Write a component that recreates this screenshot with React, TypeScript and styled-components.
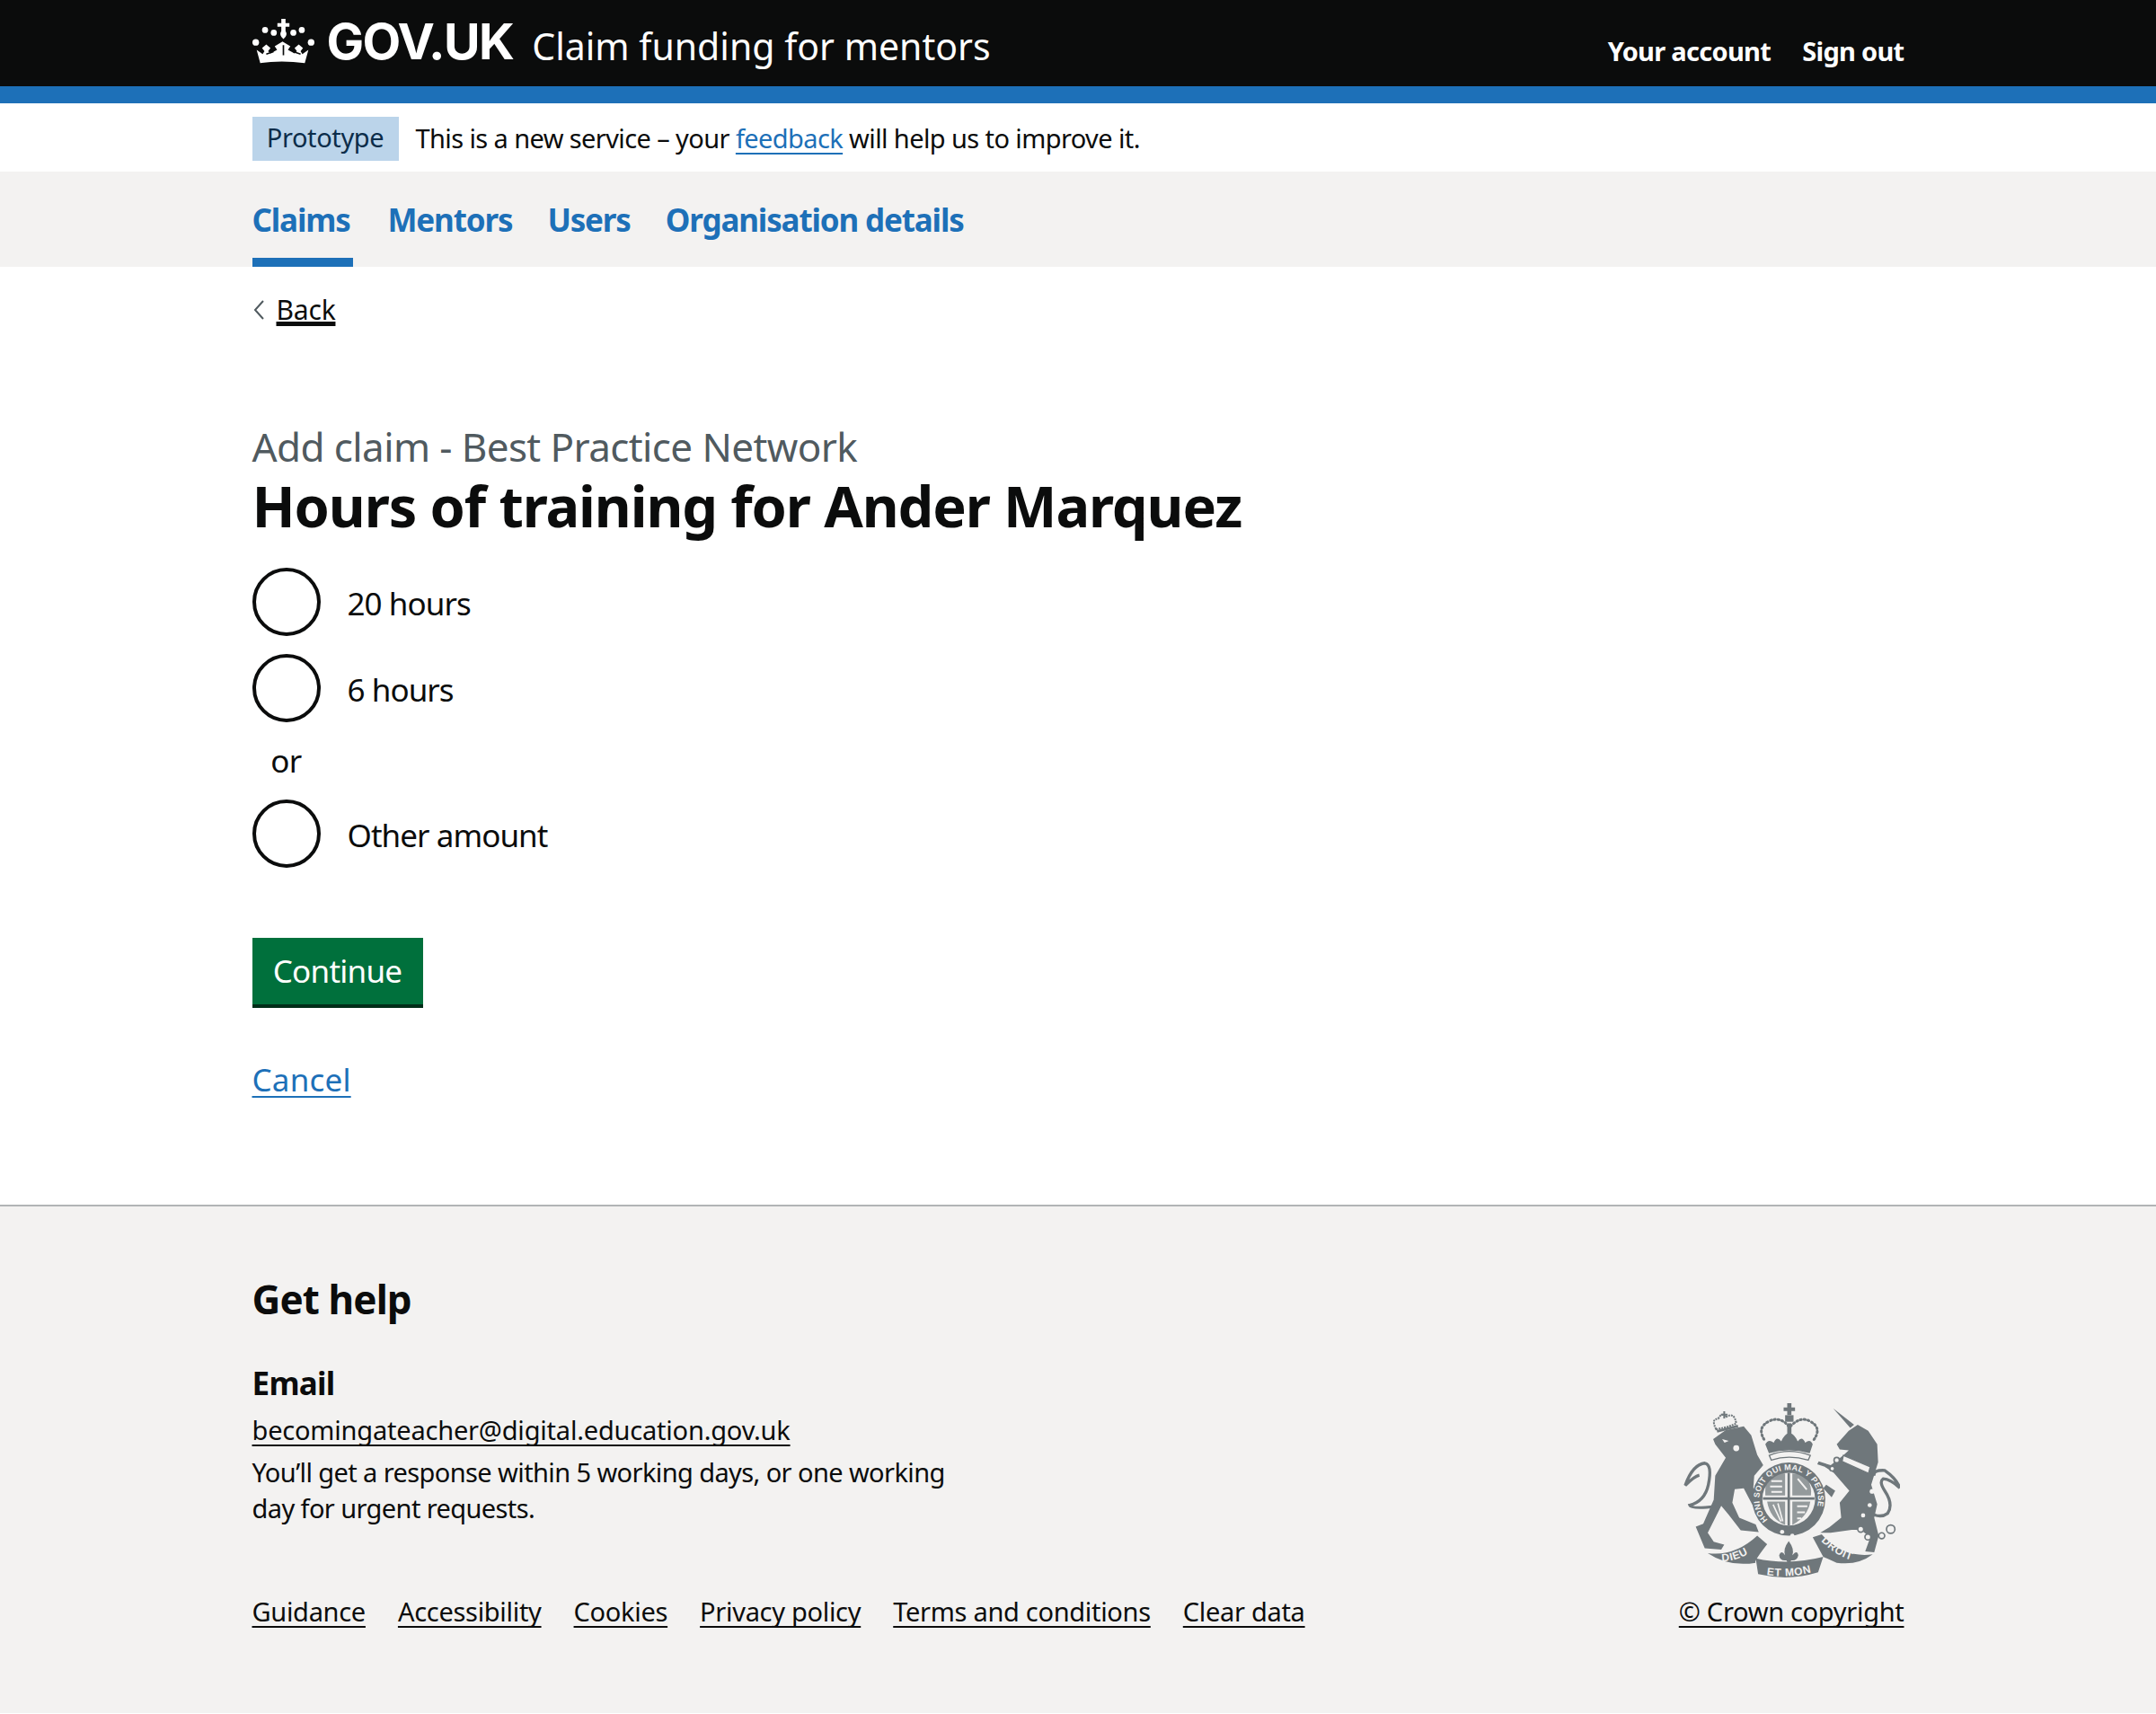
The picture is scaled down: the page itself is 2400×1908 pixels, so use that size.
import styled, { createGlobalStyle, css } from 'styled-components';

const GlobalStyle = createGlobalStyle`
  html, body { margin: 0; padding: 0; background: #fff; }
  body { font-family: 'Noto Sans', 'Liberation Sans', sans-serif; color: #0b0c0c; }
  * { box-sizing: border-box; }
`;

const underline = css`
  text-decoration: underline;
  text-decoration-thickness: 2px;
  text-underline-offset: 5px;
  text-decoration-skip-ink: none;
`;

const CrownLogo = () => (
  <svg width="69" height="50" viewBox="62 33 206 149" fill="#fff" aria-hidden="true">
    <path d="M158 33h14v14h13v12h-13v14q9 14 -7 27q-16 -13 -7 -27V59h-13V47h13z" />
    <circle cx="104" cy="70" r="10" />
    <circle cx="133" cy="79" r="10" />
    <circle cx="198" cy="79" r="10" />
    <circle cx="226" cy="70" r="10" />
    <circle cx="73" cy="111" r="11" />
    <circle cx="257" cy="111" r="11" />
    <path d="M88 180l-12 -44l20 14l6 -10l-8 -10l14 -12l14 12l-8 10l8 8l22 -12l-8 -12l26 -16l26 16l-8 12l22 12l8 -8l-8 -10l14 -12l14 12l-8 10l6 10l20 -14l-12 44q-77 -10 -150 0z" />
    <path d="M108 150l24 -8M222 150l-24 -8M165 120v34" stroke="#0b0c0c" strokeWidth="5" />
  </svg>
);

const Crest = () => (
  <svg width="241" height="197" viewBox="100 55 720 590" fill="#6f777b" aria-hidden="true">
    <defs>
      <path id="garter" d="M380 447A98 98 0 1 1 520 447" />
      <path id="dieu" d="M215 585Q290 590 355 530" />
      <path id="etmon" d="M362 628Q450 645 540 618" />
      <path id="droit" d="M555 515Q625 585 690 585" />
    </defs>
    {/* lion */}
    <path d="M198 178L240 148L300 135L325 165L345 230L365 265L335 300L332 340L360 380L366 420L345 428L300 342L270 345L262 390L285 440L340 462L350 488L290 482L250 430L225 400L200 450L180 490L200 520L235 530L225 546L170 542L140 470L165 460L200 380L205 300L240 240L205 195Z" />
    <path d="M205 402Q125 412 120 398Q170 385 182 330Q196 262 170 258Q130 262 105 332Q135 302 152 298" fill="none" stroke="#6f777b" strokeWidth="10" />
    {/* lion crown */}
    <path d="M208 145Q190 110 215 110Q228 85 240 105Q268 85 275 125Q260 135 208 145Z" fill="none" stroke="#6f777b" strokeWidth="6" strokeDasharray="6 3" />
    <path d="M232 85h6v8h8v6h-8v10h-6V99h-8v-6h8z" />
    <path d="M210 148L280 130L282 138L212 156Z" />
    <circle cx="275" cy="208" r="10" fill="#f3f2f1" />
    <path d="M228 178l22 6l-14 6z" fill="#f3f2f1" />
    {/* centre crown */}
    <path d="M445 58h14v14h12v12h-12v14h-14V84h-12V72h12z" />
    <path d="M438 98h28v22h-28z" />
    <path d="M450 135Q420 100 385 118Q340 140 372 185M456 135Q490 100 520 118Q565 140 530 185" fill="none" stroke="#6f777b" strokeWidth="9" strokeDasharray="4 9" strokeLinecap="round" />
    <path d="M445 125h14v40h-14z" />
    <path d="M372 195Q382 175 400 190Q410 165 425 185Q440 155 452 160Q465 155 480 185Q495 165 505 190Q522 175 530 195L520 225Q450 205 384 225Z" />
    <path d="M385 232Q450 205 522 232L515 248Q450 228 392 248Z" fill="#f3f2f1" stroke="#6f777b" strokeWidth="4" />
    {/* garter and shield */}
    <circle cx="450" cy="378" r="122" />
    <text fontFamily="'Liberation Sans', sans-serif" fontSize="27" fontWeight="700" fill="#f3f2f1" letterSpacing="1">
      <textPath href="#garter">HONI SOIT QUI MAL Y PENSE</textPath>
    </text>
    <circle cx="450" cy="378" r="88" fill="#f3f2f1" />
    <path d="M446 290h8v176h-8zM364 372h172v8H364z" />
    <path d="M380 305Q410 290 438 292v74H372q-2 -35 8 -61zM462 292q30 0 48 14q18 30 14 60H462zM462 386h60q-8 50 -60 78zM378 386h60v78q-50 -20 -60 -78z" opacity=".72" />
    <path d="M392 318h36M388 336h40M392 354h36M480 310l30 36M478 402h34M478 422h26M478 442h14" stroke="#f3f2f1" strokeWidth="6" />
    <path d="M398 396l26 56M414 392l16 60" stroke="#f3f2f1" strokeWidth="5" />
    <circle cx="428" cy="487" r="7" fill="#f3f2f1" />
    <circle cx="462" cy="500" r="7" fill="#f3f2f1" />
    {/* unicorn */}
    <path d="M598 75L668 130L655 140Z" />
    <path d="M610 195L650 150L680 130L715 150L745 195L748 255L725 330L745 395L735 440L750 500L735 555L705 552L722 505L690 480L660 480L590 490L555 490L585 472L625 440L620 390L652 350L600 290L570 270L545 262L550 252L590 265L632 232L650 215L620 212Z" />
    <path d="M735 300Q730 280 770 282Q810 310 820 340Q790 312 765 310Q750 320 770 350Q800 395 780 425Q760 440 735 430" fill="none" stroke="#6f777b" strokeWidth="10" />
    <path d="M632 232L722 270L716 292L628 252Z" fill="#f3f2f1" stroke="#6f777b" strokeWidth="4" />
    <circle cx="610" cy="248" r="9" fill="#f3f2f1" stroke="#6f777b" strokeWidth="5" />
    <circle cx="595" cy="276" r="8" fill="#f3f2f1" stroke="#6f777b" strokeWidth="5" />
    <circle cx="728" cy="352" r="8" fill="#f3f2f1" />
    <circle cx="720" cy="398" r="7" fill="#f3f2f1" />
    <circle cx="698" cy="432" r="7" fill="#f3f2f1" />
    <circle cx="690" cy="478" r="10" fill="#f3f2f1" stroke="#6f777b" strokeWidth="5" />
    <circle cx="714" cy="504" r="10" fill="#f3f2f1" stroke="#6f777b" strokeWidth="5" />
    <circle cx="760" cy="500" r="10" fill="#f3f2f1" stroke="#6f777b" strokeWidth="5" />
    <circle cx="790" cy="478" r="14" fill="#f3f2f1" stroke="#6f777b" strokeWidth="5" />
    <path d="M575 330l30 20l-12 22l-28 -30z" />
    {/* motto */}
    <path d="M180 558Q270 570 345 500L378 528Q330 590 340 590Q250 605 180 558Z" />
    <path d="M340 575Q450 600 565 570L548 622Q450 652 348 628Z" />
    <path d="M530 505L560 495Q630 575 730 562Q680 600 610 590L565 570Z" />
    <g fontFamily="'Liberation Sans', sans-serif" fontSize="36" fontWeight="700" fill="#f3f2f1" letterSpacing="2">
      <text><textPath href="#dieu" startOffset="8%">DIEU</textPath></text>
      <text><textPath href="#etmon" startOffset="8%">ET MON</textPath></text>
      <text><textPath href="#droit" startOffset="2%">DROIT</textPath></text>
    </g>
    {/* fleur de lis */}
    <path d="M450 518Q470 545 462 565Q478 545 482 565Q478 585 458 582L452 598L442 582Q420 585 418 565Q425 545 438 565Q430 545 450 518Z" />
  </svg>
);

const App = () => (
  <>
    <GlobalStyle />
    <Header>
      <Container>
        <HeaderInner>
          <Brand>
            <LogoLink href="#">
              <CrownLogo />
              <LogoText>GOV.UK</LogoText>
            </LogoLink>
            <ServiceName>Claim funding for mentors</ServiceName>
          </Brand>
          <HeaderNav>
            <HeaderLink href="#">Your account</HeaderLink>
            <HeaderLink href="#">Sign out</HeaderLink>
          </HeaderNav>
        </HeaderInner>
      </Container>
    </Header>
    <BlueBar />

    <PhaseBanner>
      <Container>
        <PhaseRow>
          <Tag>Prototype</Tag>
          <PhaseText>
            This is a new service – your <BlueLink href="#">feedback</BlueLink> will help us to improve it.
          </PhaseText>
        </PhaseRow>
      </Container>
    </PhaseBanner>

    <PrimaryNav>
      <Container>
        <NavList>
          <NavItem href="#" $active>Claims</NavItem>
          <NavItem href="#">Mentors</NavItem>
          <NavItem href="#">Users</NavItem>
          <NavItem href="#">Organisation details</NavItem>
        </NavList>
      </Container>
    </PrimaryNav>

    <Container>
      <BackLink href="#">
        <svg width="14" height="24" viewBox="0 0 14 24" fill="none" stroke="#505a5f" strokeWidth="2" aria-hidden="true">
          <path d="M12 2L3 12l9 10" />
        </svg>
        <BackText>Back</BackText>
      </BackLink>

      <Main>
        <Caption>Add claim - Best Practice Network</Caption>
        <Heading>Hours of training for Ander Marquez</Heading>
        <Radios>
          <RadioRow>
            <RadioInput type="radio" name="hours" />
            <RadioLabel>20 hours</RadioLabel>
          </RadioRow>
          <RadioRow>
            <RadioInput type="radio" name="hours" />
            <RadioLabel>6 hours</RadioLabel>
          </RadioRow>
          <Divider>or</Divider>
          <RadioRow>
            <RadioInput type="radio" name="hours" />
            <RadioLabel>Other amount</RadioLabel>
          </RadioRow>
        </Radios>
        <ContinueButton type="button">Continue</ContinueButton>
        <CancelRow>
          <CancelLink href="#">Cancel</CancelLink>
        </CancelRow>
      </Main>
    </Container>

    <Footer>
      <Container>
        <HelpTitle>Get help</HelpTitle>
        <EmailTitle>Email</EmailTitle>
        <FooterRow>
          <HelpBlock>
            <EmailLine><EmailLink href="#">becomingateacher@digital.education.gov.uk</EmailLink></EmailLine>
            <HelpText>You’ll get a response within 5 working days, or one working day for urgent requests.</HelpText>
          </HelpBlock>
        </FooterRow>
        <FooterBottom>
          <FooterLinks>
            <FooterLink href="#">Guidance</FooterLink>
            <FooterLink href="#">Accessibility</FooterLink>
            <FooterLink href="#">Cookies</FooterLink>
            <FooterLink href="#">Privacy policy</FooterLink>
            <FooterLink href="#">Terms and conditions</FooterLink>
            <FooterLink href="#">Clear data</FooterLink>
          </FooterLinks>
          <Copyright>
            <Crest />
            <FooterLink href="#">© Crown copyright</FooterLink>
          </Copyright>
        </FooterBottom>
      </Container>
    </Footer>
  </>
);

export default App;

const Container = styled.div`
  width: 1839px;
  margin: 0 auto;
`;

const Header = styled.header`
  height: 96px;
  background: #0b0c0c;
`;

const HeaderInner = styled.div`
  height: 96px;
  display: flex;
  justify-content: space-between;
`;

const Brand = styled.div`
  display: flex;
  align-items: flex-start;
`;

const LogoLink = styled.a`
  display: flex;
  align-items: flex-start;
  gap: 14px;
  padding-top: 21px;
  color: #fff;
  text-decoration: none;
`;

const LogoText = styled.span`
  font-family: 'Inter', sans-serif;
  font-size: 55.5px;
  line-height: 50px;
  font-weight: 700;
  letter-spacing: -1.6px;
`;

const ServiceName = styled.span`
  margin: 24px 0 0 21px;
  font-size: 41px;
  line-height: 54px;
  color: #fff;
`;

const HeaderNav = styled.nav`
  display: flex;
  gap: 35px;
  padding-top: 36px;
`;

const HeaderLink = styled.a`
  font-size: 29px;
  line-height: 42px;
  font-weight: 700;
  letter-spacing: -0.7px;
  color: #fff;
  text-decoration: none;
`;

const BlueBar = styled.div`
  height: 19px;
  background: #1d70b8;
`;

const PhaseBanner = styled.div`
  height: 76px;
  background: #fff;
`;

const PhaseRow = styled.div`
  display: flex;
  align-items: center;
  gap: 19px;
  padding-top: 15px;
`;

const Tag = styled.strong`
  width: 163px;
  height: 49px;
  background: #bbd4ea;
  color: #0c2d4a;
  font-size: 29px;
  line-height: 46px;
  font-weight: 400;
  letter-spacing: -0.4px;
  text-align: center;
`;

const PhaseText = styled.p`
  margin: -2px 0 0;
  font-size: 29px;
  line-height: 42px;
  letter-spacing: -0.6px;
`;

const BlueLink = styled.a`
  color: #1d70b8;
  ${underline}
`;

const PrimaryNav = styled.nav`
  height: 106px;
  background: #f3f2f1;
`;

const NavList = styled.div`
  display: flex;
  gap: 39px;
`;

const NavItem = styled.a<{ $active?: boolean }>`
  height: 106px;
  min-width: ${({ $active }) => ($active ? '112px' : '0')};
  padding-top: 30px;
  font-size: 35px;
  line-height: 48px;
  font-weight: 700;
  letter-spacing: -1.15px;
  color: #1d70b8;
  text-decoration: none;
  border-bottom: 10px solid ${({ $active }) => ($active ? '#1d70b8' : 'transparent')};
`;

const BackLink = styled.a`
  display: inline-flex;
  align-items: center;
  gap: 13px;
  margin-top: 28px;
  color: #0b0c0c;
`;

const BackText = styled.span`
  font-size: 30px;
  line-height: 40px;
  letter-spacing: -0.2px;
  ${underline}
`;

const Main = styled.main`
  padding-top: 104px;
`;

const Caption = styled.div`
  font-size: 44px;
  line-height: 56px;
  letter-spacing: -0.6px;
  color: #505a5f;
`;

const Heading = styled.h1`
  margin: 0;
  font-size: 63px;
  line-height: 76px;
  font-weight: 700;
  letter-spacing: -1.1px;
`;

const Radios = styled.div`
  display: flex;
  flex-direction: column;
  gap: 20px;
  margin-top: 31px;
`;

const RadioRow = styled.label`
  display: flex;
  align-items: center;
  gap: 30px;
  height: 76px;
`;

const RadioInput = styled.input`
  appearance: none;
  width: 76px;
  height: 76px;
  margin: 0;
  flex: none;
  border: 4px solid #0b0c0c;
  border-radius: 50%;
  background: #fff;
`;

const RadioLabel = styled.span`
  font-size: 35px;
  line-height: 48px;
  letter-spacing: -0.95px;
  padding-top: 3px;
`;

const Divider = styled.div`
  width: 76px;
  height: 46px;
  font-size: 35px;
  line-height: 46px;
  letter-spacing: -0.5px;
  text-align: center;
`;

const ContinueButton = styled.button`
  display: block;
  width: 190px;
  height: 78px;
  margin-top: 78px;
  padding: 0 0 4px;
  border: 0;
  background: #00703c;
  box-shadow: inset 0 -4px 0 #002d18;
  color: #fff;
  font-family: inherit;
  font-size: 35px;
  line-height: 48px;
  letter-spacing: -0.75px;
`;

const CancelRow = styled.div`
  margin-top: 55px;
`;

const CancelLink = styled.a`
  font-size: 35px;
  line-height: 50px;
  letter-spacing: 0.2px;
  color: #1d70b8;
  ${underline}
`;

const Footer = styled.footer`
  height: 566px;
  margin-top: 114px;
  padding-top: 73px;
  background: #f3f2f1;
  border-top: 2px solid #b1b4b6;
`;

const HelpTitle = styled.h2`
  margin: 0;
  font-size: 44px;
  line-height: 60px;
  font-weight: 700;
  letter-spacing: -0.9px;
`;

const EmailTitle = styled.h3`
  margin: 40px 0 0;
  font-size: 35px;
  line-height: 48px;
  font-weight: 700;
  letter-spacing: -0.7px;
`;

const FooterRow = styled.div`
  display: flex;
`;

const HelpBlock = styled.div`
  width: 790px;
`;

const EmailLine = styled.div`
  margin-top: 8px;
  line-height: 40px;
`;

const FooterLink = styled.a`
  font-size: 29px;
  line-height: 40px;
  letter-spacing: -0.3px;
  color: #0b0c0c;
  ${underline}
`;

const EmailLink = styled(FooterLink)`
  letter-spacing: -0.2px;
`;

const HelpText = styled.p`
  margin: 2px 0 0;
  font-size: 29px;
  line-height: 40px;
  letter-spacing: -0.6px;
`;

const FooterBottom = styled.div`
  display: flex;
  justify-content: space-between;
  align-items: flex-end;
  margin-top: -138px;
`;

const FooterLinks = styled.div`
  display: flex;
  gap: 36px;
  line-height: 40px;
`;

const Copyright = styled.div`
  display: flex;
  flex-direction: column;
  align-items: center;
  gap: 16px;
`;
